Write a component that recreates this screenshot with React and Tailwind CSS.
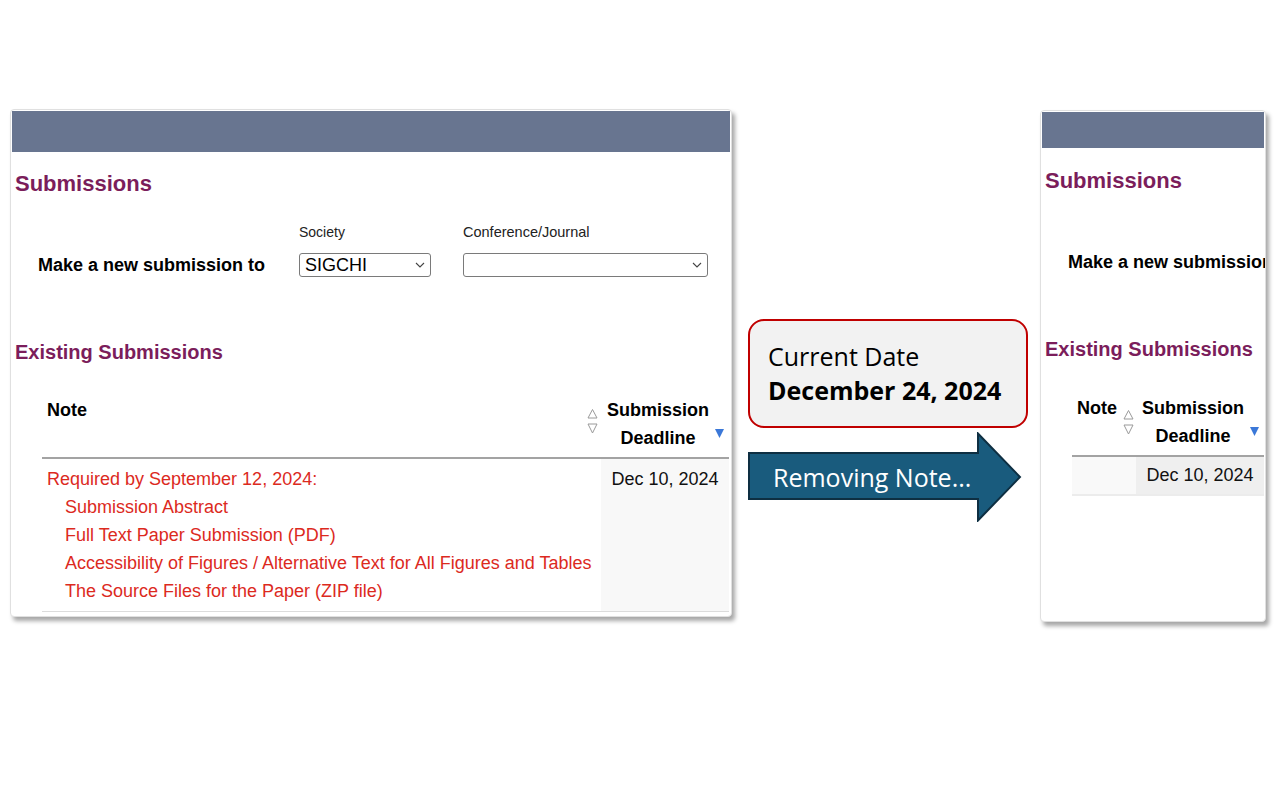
import React from "react"

const heading = "text-[#7b1d5b] leading-[24px] font-bold pl-[3px] whitespace-nowrap"

const Chevron = () => (
  <svg width="10" height="6" viewBox="0 0 10 6" className="text-[#444]">
    <path d="M1 1 L5 5 L9 1" fill="none" stroke="currentColor" strokeWidth="1.1" />
  </svg>
)

const SortIcon = () => (
  <svg width="11" height="28" viewBox="0 0 11 28">
    <path d="M5.5 1.5 L10 10 H1 Z" fill="none" stroke="#9a9a9a" strokeWidth="1" />
    <path d="M1 16 H10 L5.5 25 Z" fill="none" stroke="#9a9a9a" strokeWidth="1" />
  </svg>
)

const BlueDown = () => (
  <svg width="9" height="9" viewBox="0 0 9 9">
    <path d="M0 0 H9 L4.5 9 Z" fill="#3b78d8" />
  </svg>
)

const FakeSelect = ({ value, width }) => (
  <div
    className="h-[24px] border border-[#7a7a7a] rounded-[3px] bg-white flex items-center justify-between pl-[5px] pr-[5px] text-[18px] leading-[22px] text-black"
    style={{ width }}
  >
    <span>{value}</span>
    <Chevron />
  </div>
)

const NewSubmission = ({ labels = true }) => (
  <div className="mt-[27px] grid grid-cols-[287px_164px_245px] gap-y-[12px] items-end whitespace-nowrap">
    <div className="h-[18px]" />
    <div className="text-[14px] leading-[18px] text-[#222]">{labels && "Society"}</div>
    <div className="text-[14.5px] leading-[18px] text-[#222]">{labels && "Conference/Journal"}</div>
    <div className="pl-[26px] text-[18px] leading-[24px] font-bold text-black">Make a new submission to</div>
    {labels && <FakeSelect value="SIGCHI" width="132px" />}
    {labels && <FakeSelect value="" width="245px" />}
  </div>
)

const items = [
  "Submission Abstract",
  "Full Text Paper Submission (PDF)",
  "Accessibility of Figures / Alternative Text for All Figures and Tables",
  "The Source Files for the Paper (ZIP file)",
]

const DeadlineHeader = () => (
  <div className="flex items-start pt-[2px] pb-[5px]">
    <div className="flex-1 text-center text-[18px] leading-[28px] font-bold text-black">
      Submission
      <br />
      Deadline
    </div>
    <div className="pt-[33px] pr-[5px]">
      <BlueDown />
    </div>
  </div>
)

const Card = ({ className, barHeight, children }) => (
  <div
    className={`bg-white border border-[#e0e0e0] rounded-[4px] p-[1px] shadow-[3px_4px_4px_rgba(0,0,0,0.35)] overflow-hidden shrink-0 ${className}`}
  >
    <div className="bg-[#687590]" style={{ height: barHeight }} />
    {children}
  </div>
)

export default function App() {
  return (
    <div
      className="w-[1280px] h-[800px] bg-white flex items-start overflow-hidden"
      style={{ fontFamily: '"Liberation Sans", Arial, sans-serif' }}
    >
      {/* before */}
      <Card className="ml-[10px] mt-[109px] w-[722px] h-[508px]" barHeight="41px">
        <h2 className={`${heading} text-[22px] mt-[20px]`}>Submissions</h2>
        <NewSubmission />
        <h2 className={`${heading} text-[20px] mt-[63px]`}>Existing Submissions</h2>

        <div className="ml-[30px] mt-[30px] grid grid-cols-[559px_128px]">
          <div className="border-b-2 border-[#a3a3a3] flex justify-between pt-[2px] pl-[5px] pr-[3px]">
            <span className="text-[18px] leading-[28px] font-bold text-black">Note</span>
            <div className="pt-[12px]">
              <SortIcon />
            </div>
          </div>
          <div className="border-b-2 border-[#a3a3a3]">
            <DeadlineHeader />
          </div>

          <div className="border-b border-[#dcdcdc] pt-[6px] pb-[6px] pl-[5px] text-[18px] leading-[28px] text-[#dc2a1e]">
            <div>Required by September 12, 2024:</div>
            {items.map((t) => (
              <div key={t} className="pl-[18px]">
                {t}
              </div>
            ))}
          </div>
          <div className="border-b border-[#dcdcdc] bg-[#f8f8f8] pt-[6px] text-center text-[18px] leading-[28px] text-[#111]">
            Dec 10, 2024
          </div>
        </div>
      </Card>

      {/* the change */}
      <div className="ml-[16px] mt-[319px] w-[280px] shrink-0 flex flex-col" style={{ fontFamily: '"Open Sans", sans-serif' }}>
        <div className="h-[109px] border-2 border-[#c00000] rounded-[16px] bg-[#f2f2f2] pl-[18px] pt-[18px] text-black">
          <div className="text-[25px] leading-[34px]">Current Date</div>
          <div className="text-[25px] leading-[34px] font-bold">December 24, 2024</div>
        </div>
        <div className="relative mt-[4px] w-[274px] h-[90px]">
          <svg width="274" height="90" viewBox="0 0 274 90">
            <path d="M1 21 H230 V1.5 L272 45 L230 88.5 V67 H1 Z" fill="#195b7d" stroke="#0e2f42" strokeWidth="2" strokeLinejoin="miter" />
          </svg>
          <div className="absolute left-[25px] top-[28px] text-white text-[25px] leading-[34px] whitespace-nowrap">
            Removing Note...
          </div>
        </div>
      </div>

      {/* after */}
      <Card className="ml-[12px] mt-[110px] w-[226px] h-[512px]" barHeight="36px">
        <h2 className={`${heading} text-[22px] mt-[21px]`}>Submissions</h2>
        <NewSubmission labels={false} />
        <h2 className={`${heading} text-[20px] mt-[63px]`}>Existing Submissions</h2>

        <div className="ml-[30px] mt-[31px] grid grid-cols-[64px_128px]">
          <div className="border-b-2 border-[#a3a3a3] flex justify-between pt-[2px] pl-[5px] pr-[2px]">
            <span className="text-[18px] leading-[28px] font-bold text-black">Note</span>
            <div className="pt-[15px]">
              <SortIcon />
            </div>
          </div>
          <div className="border-b-2 border-[#a3a3a3]">
            <DeadlineHeader />
          </div>

          <div className="border-b-2 border-[#ececec] bg-[#f9f9f9]" />
          <div className="border-b-2 border-[#ececec] bg-[#efefef] pt-[4px] pb-[5px] text-center text-[18px] leading-[28px] text-[#111]">
            Dec 10, 2024
          </div>
        </div>
      </Card>
    </div>
  )
}
